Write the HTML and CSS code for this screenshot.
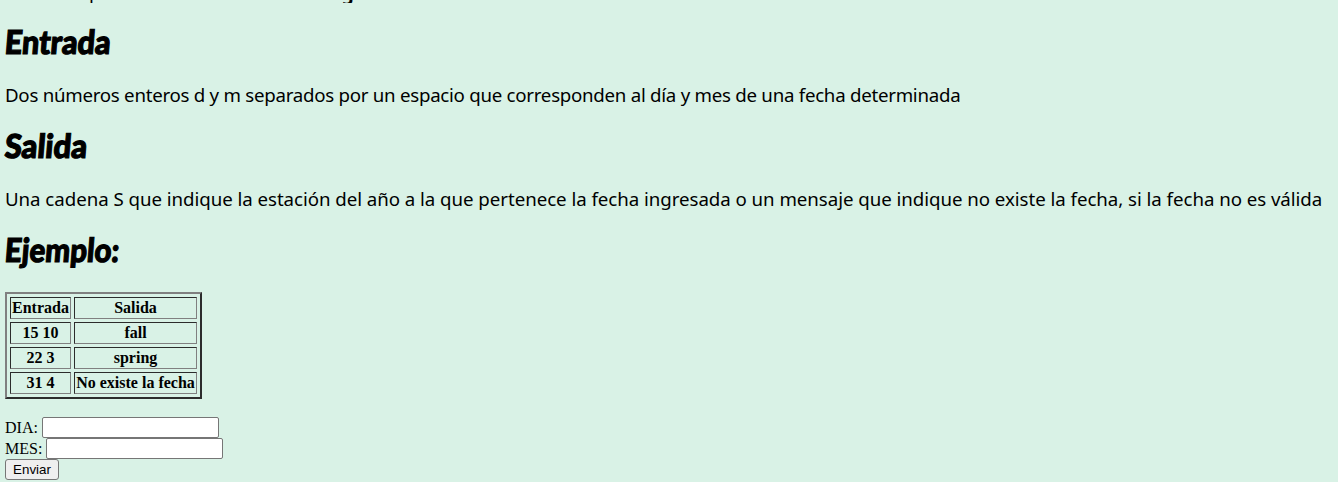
FILE: index.html
```
<!DOCTYPE html>
<html lang="es">
<head>
<meta charset="utf-8">
<title>Estaciones</title>
<link rel="stylesheet" href="styles.css">
</head>
<body>
<div class="previous"><span class="prev-p">p</span><span class="prev-g">g</span></div>
<h1 class="title"><span class="brush entrada">Entrada</span></h1>
<p class="text"><span class="first">Dos números enteros d y m separados por un espacio que corresponden al día y mes de una fecha determinada</span></p>
<h1 class="title"><span class="brush salida">Salida</span></h1>
<p class="text"><span class="second">Una cadena S que indique la estación del año a la que pertenece la fecha ingresada o un mensaje que indique no existe la fecha, si la fecha no es válida</span></p>
<h1 class="title"><span class="brush ejemplo">Ejemplo:</span></h1>
<table class="examples">
<tr><th class="narrow">Entrada</th><th>Salida</th></tr>
<tr><th>15 10</th><th>fall</th></tr>
<tr><th>22 3</th><th>spring</th></tr>
<tr><th>31 4</th><th>No existe la fecha</th></tr>
</table>
<form class="form">
<label class="row">DIA: <input class="field" type="text"></label>
<label class="row">MES: <input class="field" type="text"></label>
<button class="send" type="button">Enviar</button>
</form>
</body>
</html>
```
FILE: styles.css
```
html { overflow: hidden; }
body { margin: 0; padding-left: 5px; height: 482px; overflow: hidden; background: #d9f2e6; color: #000; font-family: "Liberation Serif", serif; font-size: 16px; }
.previous { display: flex; height: 3px; align-items: flex-end; overflow: hidden; font: 19px/19px "Noto Sans", sans-serif; }
.prev-p { margin-left: 84px; }
.prev-g { margin-left: 241px; font-weight: bold; }
.title { margin: 0; height: 79px; font: 900 33px/77px Lato, sans-serif; }
.brush { display: inline-block; transform-origin: 0 50%; -webkit-text-stroke: 1.2px #000; white-space: nowrap; }
.entrada { transform: scaleX(.925) skewX(-5deg); }
.salida { transform: scaleX(.94) skewX(-5deg); }
.ejemplo { transform: scaleX(.895) skewX(-5deg); }
.text { margin: 0; height: 25px; font: 18.7px/25px "Noto Sans", sans-serif; white-space: nowrap; }
.first { letter-spacing: -.268px; }
.second { letter-spacing: -.046px; }
.examples { margin-top: 2px; width: 197px; height: 107px; table-layout: fixed; box-sizing: border-box; border-collapse: separate; border-spacing: 3px; border: 2px solid; border-color: #808080 #2c2c2c #2c2c2c #808080; }
.examples th { box-sizing: border-box; height: 22px; padding: 0; line-height: 20px; border: 1px solid; border-color: #2c2c2c #808080 #808080 #2c2c2c; white-space: nowrap; }
.examples .narrow { width: 61px; }
.form { margin-top: 18px; }
.row { display: flex; align-items: center; gap: 4px; height: 21px; }
.field { width: 177px; height: 21px; box-sizing: border-box; margin: 0; border: 1px solid #767676; border-radius: 2px; background: #fff; }
.send { display: block; width: 54px; height: 21px; margin: 0; padding: 0; border: 1px solid #767676; border-radius: 3px; background: #efefef; color: #000; font: 13.333px/18px "Liberation Sans", sans-serif; }
```
